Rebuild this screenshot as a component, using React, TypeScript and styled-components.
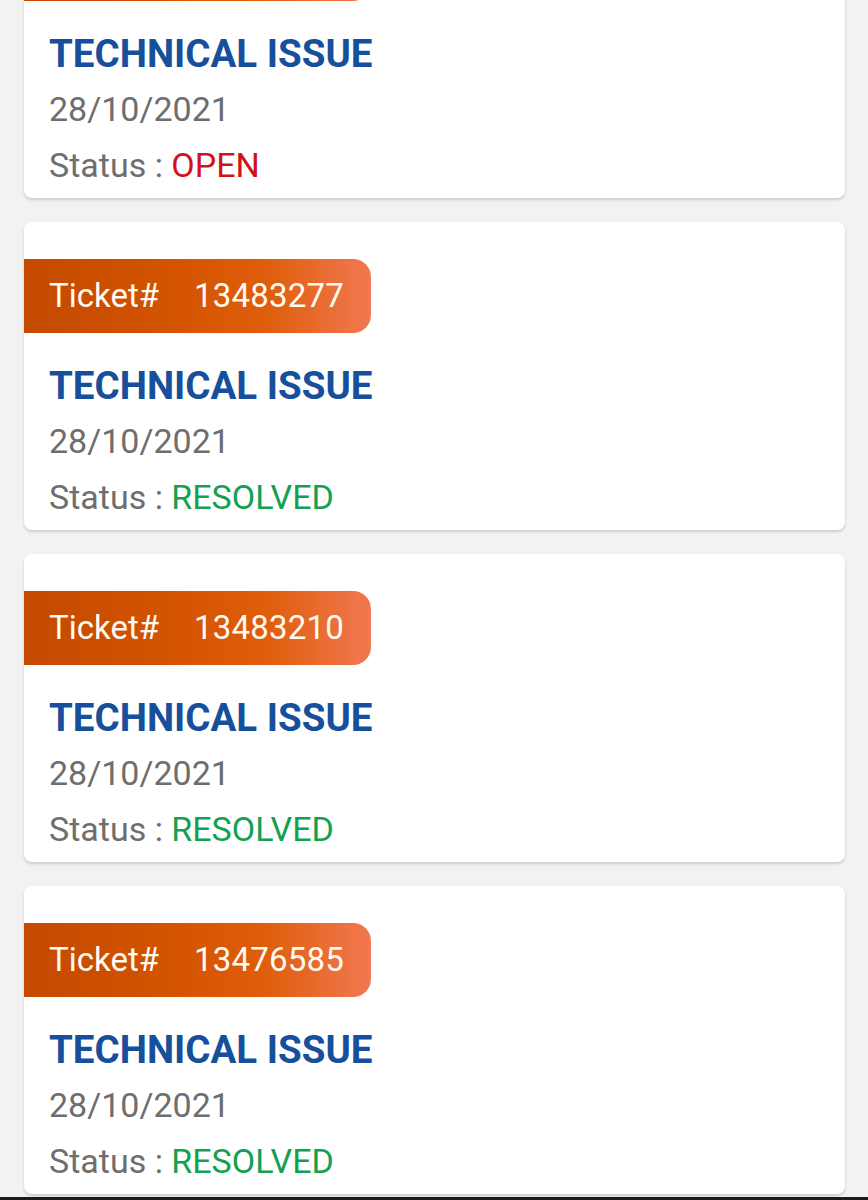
import styled, { createGlobalStyle } from "styled-components"

const GlobalStyle = createGlobalStyle`
    html, body {
        margin: 0;
        padding: 0;
        background: #f2f2f2;
    }
    body {
        font-family: Roboto, "Liberation Sans", Arial, sans-serif;
    }
`

type Status = "OPEN" | "RESOLVED"

interface Ticket {
    id: string
    title: string
    date: string
    status: Status
}

const tickets: Ticket[] = [
    { id: "13483301", title: "TECHNICAL ISSUE", date: "28/10/2021", status: "OPEN" },
    { id: "13483277", title: "TECHNICAL ISSUE", date: "28/10/2021", status: "RESOLVED" },
    { id: "13483210", title: "TECHNICAL ISSUE", date: "28/10/2021", status: "RESOLVED" },
    { id: "13476585", title: "TECHNICAL ISSUE", date: "28/10/2021", status: "RESOLVED" },
]

const TicketCard = ({ ticket }: { ticket: Ticket }) => {
    return (
        <Card>
            <Badge>
                <span>Ticket#</span>
                <BadgeNumber>{ticket.id}</BadgeNumber>
            </Badge>
            <Title>{ticket.title}</Title>
            <Line>{ticket.date}</Line>
            <Line>
                Status : <StatusText $status={ticket.status}>{ticket.status}</StatusText>
            </Line>
        </Card>
    )
}

const App = () => {
    return (
        <Screen>
            <GlobalStyle />
            <List>
                {tickets.map((t) => (
                    <TicketCard key={t.id} ticket={t} />
                ))}
            </List>
            <BottomEdge />
        </Screen>
    )
}

export default App

const Screen = styled.div`
    height: 1200px;
    overflow: hidden;
    background: #f2f2f2;
`

// the list is scrolled: the first card is partly above the top edge
const List = styled.div`
    display: flex;
    flex-direction: column;
    gap: 24px;
    padding: 0 23px 0 24px;
    margin-top: -110px;
`

const Card = styled.div`
    background: #ffffff;
    border-radius: 8px;
    box-shadow: 0 2px 3px rgba(0, 0, 0, 0.16);
    padding: 37px 0 5px 0;
    display: flex;
    flex-direction: column;
    align-items: flex-start;
`

const Badge = styled.div`
    display: inline-flex;
    align-items: center;
    gap: 35px;
    height: 74px;
    padding: 0 27px 0 25px;
    border-radius: 0 18px 18px 0;
    background: linear-gradient(90deg, #c44a00 0%, #d45400 45%, #df5e0c 70%, #f27852 100%);
    color: #fffaf2;
    font-size: 33px;
    line-height: 74px;
`

const BadgeNumber = styled.span`
    letter-spacing: 0.2px;
`

const Title = styled.div`
    margin-top: 26px;
    padding-left: 25px;
    font-size: 38.5px;
    line-height: 54px;
    font-weight: 700;
    color: #164f9b;
`

const Line = styled.div`
    padding-left: 25px;
    font-size: 34px;
    line-height: 56px;
    color: #6e6e6e;
`

const StatusText = styled.span<{ $status: Status }>`
    color: ${(p) => (p.$status === "OPEN" ? "#d0121b" : "#12a150")};
`

const BottomEdge = styled.div`
    margin-top: 3px;
    height: 10px;
    background: #1c1c1c;
`
